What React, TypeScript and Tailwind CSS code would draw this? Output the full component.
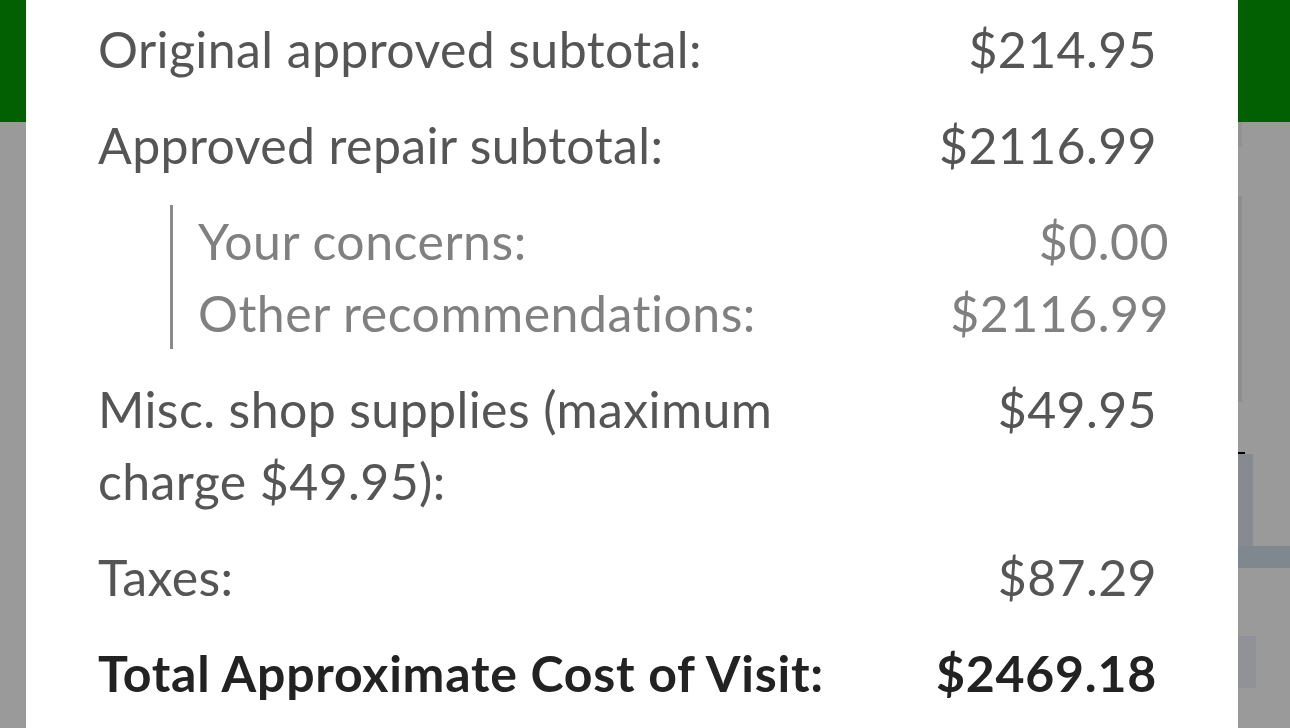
const rows = [
  { label: 'Original approved subtotal:', amount: '$214.95' },
  { label: 'Approved repair subtotal:', amount: '$2116.99' },
]

const subRows = [
  { label: 'Your concerns:', amount: '$0.00' },
  { label: 'Other recommendations:', amount: '$2116.99' },
]

function Row({ label, amount, bold = false }: { label: string; amount: string; bold?: boolean }) {
  return (
    <div
      className={`flex items-start justify-between ${
        bold ? 'font-bold text-[#222222] tracking-[0.75px]' : 'text-[#555555] tracking-[0.4px]'
      }`}
    >
      <div className="w-[740px]">{label}</div>
      <div className="text-right">{amount}</div>
    </div>
  )
}

function Backdrop({ side }: { side: 'left' | 'right' }) {
  return (
    <div className={`flex flex-col shrink-0 ${side === 'left' ? 'w-[26px]' : 'flex-1'}`}>
      <div className="h-[122px] bg-[#025f02]" />
      <div className="flex-1 bg-[#9a9a9a] flex flex-col">
        {side === 'right' && (
          <>
            <div className="h-[25px] w-[4px] bg-[#929292]" />
            <div className="h-[49px]" />
            <div className="h-[206px] w-[4px] bg-[#8e8e8e]" />
            <div className="h-[50px]" />
            <div className="h-[2px] w-[7px] bg-black" />
            <div className="h-[92px] w-[15px] bg-[#878b91]" />
            <div className="h-[22px] bg-[#7f878f]" />
            <div className="h-[68px]" />
            <div className="h-[52px] w-[18px] bg-[#909297]" />
          </>
        )}
      </div>
    </div>
  )
}

export default function App() {
  return (
    <div
      className="flex h-[728px] w-[1290px] overflow-hidden bg-[#9a9a9a]"
      style={{ fontFamily: 'Lato, "Noto Sans", sans-serif', fontVariantLigatures: 'none' }}
    >
      <Backdrop side="left" />
      <div className="w-[1212px] shrink-0 bg-white pl-[72px] pr-[81px] pt-[13px]">
        <div className="flex flex-col gap-6 text-[50px] leading-[72px]">
          {rows.map((r) => (
            <Row key={r.label} label={r.label} amount={r.amount} />
          ))}
          <div className="ml-[72px] -mr-[12px] border-l-[3px] border-[#8a8a8a] pl-[25px] text-[#808080] tracking-[0.5px]">
            {subRows.map((r) => (
              <div key={r.label} className="flex justify-between">
                <div>{r.label}</div>
                <div>{r.amount}</div>
              </div>
            ))}
          </div>
          <Row label="Misc. shop supplies (maximum charge $49.95):" amount="$49.95" />
          <Row label="Taxes:" amount="$87.29" />
          <Row label="Total Approximate Cost of Visit:" amount="$2469.18" bold />
        </div>
      </div>
      <Backdrop side="right" />
    </div>
  )
}
